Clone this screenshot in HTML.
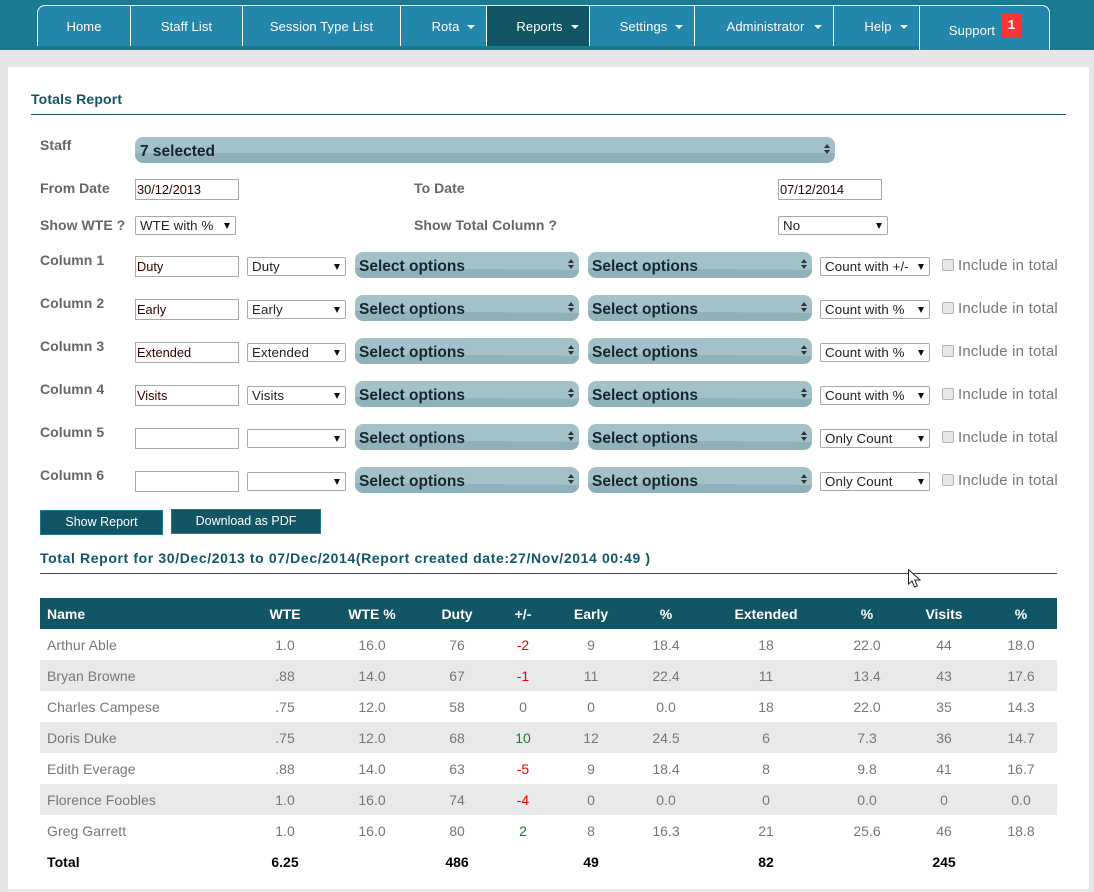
<!DOCTYPE html>
<html><head><meta charset="utf-8"><title>Totals Report</title>
<style>
html,body{margin:0;padding:0}
body{width:1094px;height:892px;background:#e6e6e6;position:relative;overflow:hidden;font-family:"Liberation Sans",sans-serif}
div,span{position:absolute;box-sizing:border-box;white-space:nowrap}
#nav{left:0;top:0;width:1094px;height:50px;background:#1c7a90}
.t{top:5px;height:41px;background:#2287aa;border-left:1px solid #fff;border-top:1px solid #fff;color:#fff;font-size:13px;line-height:41px;text-align:center;letter-spacing:.1px}
.ar{width:0;height:0;border-left:4px solid transparent;border-right:4px solid transparent;border-top:4px solid #fff;top:25px;z-index:2}
#card{left:8px;top:67px;width:1081px;height:822px;background:#fff}
.l{left:40px;color:#666;font-size:14px;font-weight:bold;line-height:16px;letter-spacing:.05px}
.i{left:135px;width:104px;height:21px;border:1px solid #a9a9a9;font-size:12.8px;line-height:20px;color:#300;padding-left:1px;background:#fff}
.s{height:19px;border:1px solid #a9a9a9;border-radius:2px;font-size:13.3px;line-height:18px;color:#222;padding-left:4px;background:#fff;letter-spacing:.1px}
.s:after{content:"";position:absolute;right:5px;top:6px;border-left:3.5px solid transparent;border-right:3.5px solid transparent;border-top:6px solid #111}
.m{height:26px;border-radius:8px;background:linear-gradient(180.5deg,#a3c1c9 64%,#8fb1ba 64%);font-size:15.5px;font-weight:bold;color:#15262c;line-height:29px;padding-left:4px;width:224px}
.m:before{content:"";position:absolute;right:5px;top:7px;border-left:3px solid transparent;border-right:3px solid transparent;border-bottom:4px solid #333}
.m:after{content:"";position:absolute;right:5px;top:13px;border-left:3px solid transparent;border-right:3px solid transparent;border-top:4px solid #333}
.c{left:942px;width:12px;height:12px;border:1px solid #b5b5b5;border-radius:2px;background:#e8e8e8}
.n{left:958px;color:#777;font-size:15px;line-height:18px;letter-spacing:.2px}
.b{background:#125666;border:1px solid #1c7a90;color:#fff;font-size:12.5px;text-align:center;line-height:22px;height:25px}
table{position:absolute;left:40px;top:598px;width:1017px;border-collapse:collapse;table-layout:fixed;font-size:14px;color:#777}
th{height:31px;background:#125666;color:#fff;font-size:14px;padding:0;text-align:center}
td{height:31px;padding:0;text-align:center}
th:first-child,td:first-child{text-align:left;padding-left:7px}
td:first-child{letter-spacing:.05px}
tr.g td{background:#e9e9e9}
tr.tot td{color:#000;font-weight:bold}
.r{color:#e00}.gr{color:#1a7a2a}
</style></head><body>
<div id="nav"></div>
<div class="t" style="left:37px;width:93px;border-top-left-radius:8px">Home</div>
<div class="t" style="left:130px;width:112px">Staff List</div>
<div class="t" style="left:242px;width:158px">Session Type List</div>
<div class="t" style="left:400px;width:86px;padding-left:4px">Rota</div><div class="ar" style="left:467px"></div>
<div class="t" style="left:486px;width:103px;background:#125666;padding-left:3px">Reports</div><div class="ar" style="left:571px"></div>
<div class="t" style="left:589px;width:105px;padding-left:3px">Settings</div><div class="ar" style="left:675px"></div>
<div class="t" style="left:694px;width:139px;padding-left:3px">Administrator</div><div class="ar" style="left:814px"></div>
<div class="t" style="left:833px;width:86px;padding-left:3px">Help</div><div class="ar" style="left:900px"></div>
<div class="t" style="left:919px;width:131px;height:45px;border-right:1px solid #fff;border-top-right-radius:8px;padding-right:25px;line-height:49px">Support</div>
<div style="left:1002px;top:13px;width:19px;height:25px;background:#f33;color:#fff;font-weight:bold;font-size:13px;text-align:center;line-height:24px">1</div>

<div id="card"></div>
<div style="left:31px;top:91px;color:#125666;font-size:14px;font-weight:bold;line-height:16px;letter-spacing:.15px">Totals Report</div>
<div style="left:31px;top:114px;width:1035px;height:1px;background:#125666"></div>

<div class="l" style="top:137px">Staff</div>
<div class="m" style="left:135px;top:137px;width:700px;padding-left:5px;background:linear-gradient(#a3c1c9 62%,#8fb1ba 62%)">7 selected</div>
<div class="l" style="top:180px">From Date</div><div class="i" style="top:179px">30/12/2013</div>
<div class="l" style="top:180px;left:414px">To Date</div><div class="i" style="top:179px;left:778px">07/12/2014</div>
<div class="l" style="top:217px">Show WTE ?</div><div class="s" style="left:135px;top:216px;width:101px">WTE with %</div>
<div class="l" style="top:217px;left:414px">Show Total Column ?</div><div class="s" style="left:778px;top:216px;width:110px">No</div>

<div class="l" style="top:252px">Column 1</div><div class="i" style="top:256px">Duty</div><div class="s" style="left:247px;top:257px;width:99px">Duty</div><div class="m" style="left:355px;top:252px">Select options</div><div class="m" style="left:588px;top:252px">Select options</div><div class="s" style="left:820px;top:257px;width:110px">Count with +/-</div><div class="c" style="top:259px"></div><div class="n" style="top:257px">Include in total</div>
<div class="l" style="top:295px">Column 2</div><div class="i" style="top:299px">Early</div><div class="s" style="left:247px;top:300px;width:99px">Early</div><div class="m" style="left:355px;top:295px">Select options</div><div class="m" style="left:588px;top:295px">Select options</div><div class="s" style="left:820px;top:300px;width:110px">Count with %</div><div class="c" style="top:302px"></div><div class="n" style="top:300px">Include in total</div>
<div class="l" style="top:338px">Column 3</div><div class="i" style="top:342px">Extended</div><div class="s" style="left:247px;top:343px;width:99px">Extended</div><div class="m" style="left:355px;top:338px">Select options</div><div class="m" style="left:588px;top:338px">Select options</div><div class="s" style="left:820px;top:343px;width:110px">Count with %</div><div class="c" style="top:345px"></div><div class="n" style="top:343px">Include in total</div>
<div class="l" style="top:381px">Column 4</div><div class="i" style="top:385px">Visits</div><div class="s" style="left:247px;top:386px;width:99px">Visits</div><div class="m" style="left:355px;top:381px">Select options</div><div class="m" style="left:588px;top:381px">Select options</div><div class="s" style="left:820px;top:386px;width:110px">Count with %</div><div class="c" style="top:388px"></div><div class="n" style="top:386px">Include in total</div>
<div class="l" style="top:424px">Column 5</div><div class="i" style="top:428px"></div><div class="s" style="left:247px;top:429px;width:99px"></div><div class="m" style="left:355px;top:424px">Select options</div><div class="m" style="left:588px;top:424px">Select options</div><div class="s" style="left:820px;top:429px;width:110px">Only Count</div><div class="c" style="top:431px"></div><div class="n" style="top:429px">Include in total</div>
<div class="l" style="top:467px">Column 6</div><div class="i" style="top:471px"></div><div class="s" style="left:247px;top:472px;width:99px"></div><div class="m" style="left:355px;top:467px">Select options</div><div class="m" style="left:588px;top:467px">Select options</div><div class="s" style="left:820px;top:472px;width:110px">Only Count</div><div class="c" style="top:474px"></div><div class="n" style="top:472px">Include in total</div>

<div class="b" style="left:40px;top:510px;width:123px">Show Report</div>
<div class="b" style="left:171px;top:509px;width:150px">Download as PDF</div>
<div style="left:40px;top:550px;color:#125666;font-size:14px;font-weight:bold;line-height:16px;letter-spacing:.62px">Total Report for 30/Dec/2013 to 07/Dec/2014(Report created date:27/Nov/2014 00:49 )</div>
<div style="left:40px;top:573px;width:1017px;height:1px;background:#125666"></div>

<table>
<colgroup><col style="width:205px"><col style="width:80px"><col style="width:94px"><col style="width:76px"><col style="width:56px"><col style="width:80px"><col style="width:70px"><col style="width:130px"><col style="width:72px"><col style="width:82px"><col style="width:72px"></colgroup>
<tr><th>Name</th><th>WTE</th><th>WTE %</th><th>Duty</th><th>+/-</th><th>Early</th><th>%</th><th>Extended</th><th>%</th><th>Visits</th><th>%</th></tr>
<tr><td>Arthur Able</td><td>1.0</td><td>16.0</td><td>76</td><td class="r">-2</td><td>9</td><td>18.4</td><td>18</td><td>22.0</td><td>44</td><td>18.0</td></tr>
<tr class="g"><td>Bryan Browne</td><td>.88</td><td>14.0</td><td>67</td><td class="r">-1</td><td>11</td><td>22.4</td><td>11</td><td>13.4</td><td>43</td><td>17.6</td></tr>
<tr><td>Charles Campese</td><td>.75</td><td>12.0</td><td>58</td><td>0</td><td>0</td><td>0.0</td><td>18</td><td>22.0</td><td>35</td><td>14.3</td></tr>
<tr class="g"><td>Doris Duke</td><td>.75</td><td>12.0</td><td>68</td><td class="gr">10</td><td>12</td><td>24.5</td><td>6</td><td>7.3</td><td>36</td><td>14.7</td></tr>
<tr><td>Edith Everage</td><td>.88</td><td>14.0</td><td>63</td><td class="r">-5</td><td>9</td><td>18.4</td><td>8</td><td>9.8</td><td>41</td><td>16.7</td></tr>
<tr class="g"><td>Florence Foobles</td><td>1.0</td><td>16.0</td><td>74</td><td class="r">-4</td><td>0</td><td>0.0</td><td>0</td><td>0.0</td><td>0</td><td>0.0</td></tr>
<tr><td>Greg Garrett</td><td>1.0</td><td>16.0</td><td>80</td><td class="gr">2</td><td>8</td><td>16.3</td><td>21</td><td>25.6</td><td>46</td><td>18.8</td></tr>
<tr class="tot"><td>Total</td><td>6.25</td><td></td><td>486</td><td></td><td>49</td><td></td><td>82</td><td></td><td>245</td><td></td></tr>
</table>

<svg style="position:absolute;left:908px;top:569px" width="14" height="20" viewBox="0 0 14 20"><path d="M.5.5V15L4 12l2.500 6 2.800-1.200L6.800 11H12Z" fill="#fff" stroke="#222" stroke-width="1"/></svg>
</body></html>
